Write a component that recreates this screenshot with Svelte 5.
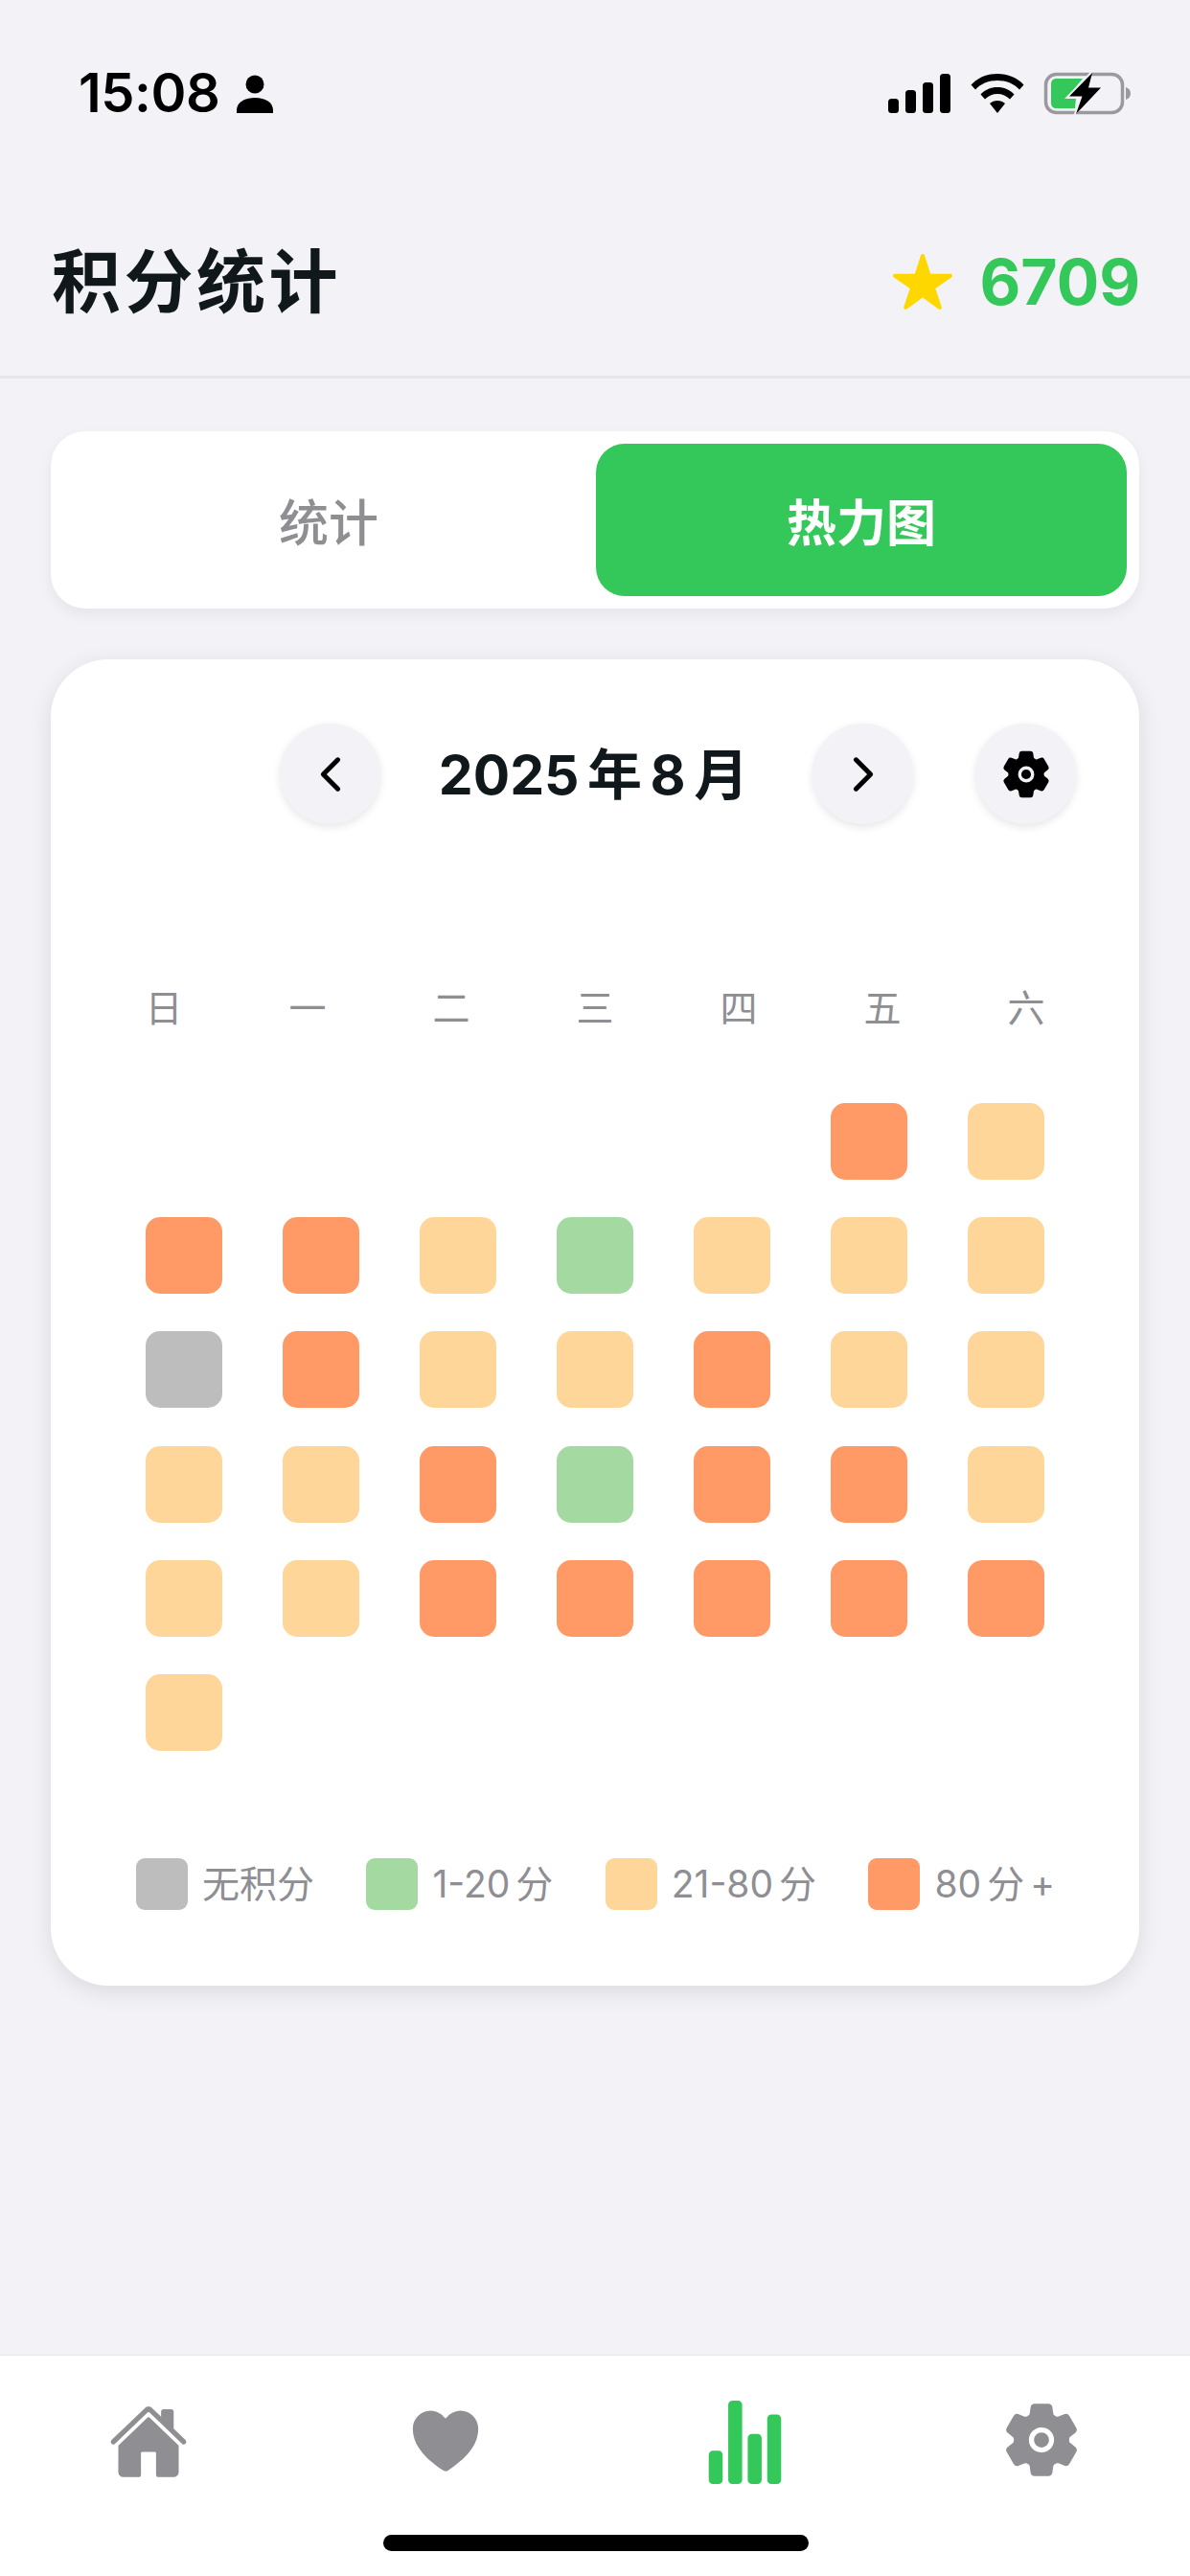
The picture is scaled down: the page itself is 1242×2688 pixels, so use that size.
<script>
  const map = { n: 'none', g: 'low', y: 'mid', o: 'high', e: 'empty' };
  const rows = ['eeeeeoy', 'ooygyyy', 'noyyoyy', 'yyogooy', 'yyooooo', 'yeeeeee'];
  const cells = rows.join('').split('').map((c) => map[c]);
  const days = ['日', '一', '二', '三', '四', '五', '六'];
  const legend = [
    { cls: 'none', label: '无积分' },
    { cls: 'low', label: '1-20 分' },
    { cls: 'mid', label: '21-80 分' },
    { cls: 'high', label: '80 分 +' }
  ];
  const gear = 'M470.39 300l-.47-.38-31.56-24.75a16.11 16.11 0 01-6.1-13.33v-11.56a16 16 0 016.11-13.22L469.92 212l.47-.38a26.68 26.68 0 005.9-34.06l-42.71-73.9a1.59 1.59 0 01-.13-.22A26.86 26.86 0 00401 92.14l-.35.13-37.1 14.93a15.94 15.94 0 01-14.47-1.29q-4.92-3.1-10-5.86a15.94 15.94 0 01-8.19-11.82l-5.59-39.59-.12-.72A27.22 27.22 0 00298.76 26h-85.52a26.92 26.92 0 00-26.45 22.39l-.09.56-5.57 39.67a16 16 0 01-8.13 11.82 175.21 175.21 0 00-10 5.82 15.92 15.92 0 01-14.43 1.27l-37.13-15-.35-.14a26.87 26.87 0 00-32.48 11.34l-.13.22-42.77 73.95a26.71 26.71 0 005.9 34.1l.47.38 31.56 24.75a16.11 16.11 0 016.1 13.33v11.56a16 16 0 01-6.11 13.22L42.08 300l-.47.38a26.68 26.68 0 00-5.9 34.06l42.71 73.9a1.59 1.59 0 01.13.22 26.86 26.86 0 0032.45 11.3l.35-.13 37.07-14.93a15.94 15.94 0 0114.47 1.29q4.92 3.11 10 5.86a15.94 15.94 0 018.19 11.82l5.56 39.59.12.72A27.22 27.22 0 00213.24 486h85.52a26.92 26.92 0 0026.45-22.39l.09-.56 5.57-39.67a16 16 0 018.18-11.82c3.42-1.84 6.76-3.79 10-5.82a15.92 15.92 0 0114.43-1.27l37.13 14.95.35.14a26.85 26.85 0 0032.48-11.34 2.53 2.53 0 01.13-.22l42.71-73.89a26.7 26.7 0 00-5.89-34.11zm-134.48-40.24a80 80 0 11-83.66-83.67 80.21 80.21 0 0183.66 83.67z';
</script>

<div class="page">
  <div class="status">
    <div class="status-left">
      <span class="time">15:08</span>
      <svg class="person" viewBox="0 0 38 40" aria-hidden="true">
        <circle cx="19" cy="10" r="9.5" />
        <path d="M0 40v-3c0-8 8-13 19-13s19 5 19 13v3z" />
      </svg>
    </div>
    <div class="status-right">
      <svg class="signal" viewBox="0 0 65 41" aria-hidden="true">
        <rect x="0" y="26" width="11" height="15" rx="3.5" />
        <rect x="18" y="17" width="11" height="24" rx="3.5" />
        <rect x="36" y="9" width="11" height="32" rx="3.5" />
        <rect x="54" y="0" width="11" height="41" rx="3.5" />
      </svg>
      <svg class="wifi" viewBox="0 0 56 41" aria-hidden="true">
        <path d="M0.5 11.5C7.5 4 17 0 28 0s20.500 4 27.500 11.500l-4.500 5C45 10 37 7 28 7S11 10 5 16.500z" />
        <path d="M10.500 21.500C15 16.500 21 14 28 14s13 2.500 17.500 7.500L41 26.500C37.500 23 33 21 28 21s-9.500 2-13 5.500z" />
        <path d="M20 31c2.200-2 5-3 8-3s5.800 1 8 3l-8 10z" />
      </svg>
      <svg class="battery" viewBox="0 0 90 45" aria-hidden="true">
        <rect class="batt-shell" x="1.500" y="2.500" width="80" height="40" rx="11" />
        <path class="batt-nub" d="M85 16c3 1 5 3 5 6.500S88 28 85 29z" />
        <path class="batt-fill" d="M13 7h27L26 24c-1 2 0 3 2 3h5l-1 11H13c-4 0-6-2-6-6V13c0-4 2-6 6-6z" />
        <path class="batt-gap" d="M50 -2L21 28h15l-6 19 34-33H47z" />
        <path class="batt-bolt" d="M50 1L26 25.500h13.500L33 44l26-27.500H46z" />
      </svg>
    </div>
  </div>

  <header class="header">
    <h1>积分统计</h1>
    <div class="score">
      <svg class="star" viewBox="0 0 512 512" aria-hidden="true">
        <path d="M394 480a16 16 0 01-9.39-3L256 383.76 127.39 477a16 16 0 01-24.55-18.08L153 310.35 23 221.2a16 16 0 019-29.2h160.38l48.4-148.95a16 16 0 0130.44 0l48.4 149H480a16 16 0 019.05 29.2L359 310.35l50.13 148.53A16 16 0 01394 480z" />
      </svg>
      <span>6709</span>
    </div>
  </header>

  <main class="content">
    <div class="tabs">
      <div class="tab">统计</div>
      <div class="tab active">热力图</div>
    </div>

    <section class="card">
      <div class="nav">
        <button class="round" aria-label="上个月">
          <svg class="chev" viewBox="0 0 512 512"><path d="M328 112L184 256l144 144" /></svg>
        </button>
        <div class="month">2025 年 8 月</div>
        <button class="round" aria-label="下个月">
          <svg class="chev" viewBox="0 0 512 512"><path d="M184 112l144 144-144 144" /></svg>
        </button>
        <button class="round gear-btn" aria-label="设置">
          <svg class="gear-sm" viewBox="0 0 512 512"><circle cx="256" cy="256" r="48" /><path d={gear} /></svg>
        </button>
      </div>

      <div class="weekdays">
        {#each days as d}<span>{d}</span>{/each}
      </div>

      <div class="grid">
        {#each cells as c}<i class="cell {c}"></i>{/each}
      </div>

      <div class="legend">
        {#each legend as l}
          <div class="legend-item"><i class="swatch {l.cls}"></i><span>{l.label}</span></div>
        {/each}
      </div>
    </section>
  </main>

  <nav class="tabbar">
    <svg class="ti ti-home" viewBox="0 0 512 512" aria-hidden="true">
      <path d="M261.560 101.280a8 8 0 00-11.060 0L66.400 277.150a8 8 0 00-2.470 5.790L63.900 448a32 32 0 0032 32H192a16 16 0 0016-16V328a8 8 0 018-8h80a8 8 0 018 8v136a16 16 0 0016 16h96.060a32 32 0 0032-32V282.940a8 8 0 00-2.470-5.790z" />
      <path d="M490.910 244.150l-74.800-71.560V64a16 16 0 00-16-16h-48a16 16 0 00-16 16v32l-57.920-55.380C272.770 35.140 264.710 32 256 32c-8.680 0-16.720 3.140-22.140 8.630l-212.700 203.500c-6.220 6-7 15.870-1.340 22.370A16 16 0 0043 267.560L250.500 69.280a8 8 0 0111.060 0l207.520 198.280a16 16 0 0022.590-.44c6.140-6.360 5.630-16.860-.76-22.970z" />
    </svg>
    <svg class="ti ti-heart" viewBox="0 0 512 512" aria-hidden="true">
      <path d="M256 448a32 32 0 01-18-5.570c-78.590-53.350-112.620-90.580-131.390-113.450-40-48.750-59.150-98.800-58.610-153C48.630 114.520 98.460 64 159.080 64c44.080 0 74.610 24.830 92.390 45.510a6 6 0 009.060 0C278.310 88.810 308.840 64 352.920 64c60.620 0 110.450 50.520 111.080 112.640.54 54.210-18.630 104.260-58.610 153-18.770 22.870-52.800 60.100-131.390 113.450a32 32 0 01-18 5.910z" />
    </svg>
    <svg class="ti ti-stats" viewBox="0 0 512 512" aria-hidden="true">
      <path d="M104 496H72a24 24 0 01-24-24V328a24 24 0 0124-24h32a24 24 0 0124 24v144a24 24 0 01-24 24zM328 496h-32a24 24 0 01-24-24V232a24 24 0 0124-24h32a24 24 0 0124 24v240a24 24 0 01-24 24zM440 496h-32a24 24 0 01-24-24V120a24 24 0 0124-24h32a24 24 0 0124 24v352a24 24 0 01-24 24zM216 496h-32a24 24 0 01-24-24V40a24 24 0 0124-24h32a24 24 0 0124 24v432a24 24 0 01-24 24z" />
    </svg>
    <svg class="ti ti-gear" viewBox="0 0 512 512" aria-hidden="true">
      <circle cx="256" cy="256" r="48" /><path d={gear} />
    </svg>
    <div class="home-indicator"></div>
  </nav>
</div>

<style>
  :global(body) {
    margin: 0;
    background: #f2f2f7;
  }
  .page {
    width: 1242px;
    height: 2688px;
    display: flex;
    flex-direction: column;
    background: #f2f2f7;
    overflow: hidden;
    font-family: Inter, "Noto Sans CJK SC", sans-serif;
    color: #11181c;
  }
  .status {
    height: 195px;
    box-sizing: border-box;
    padding: 75px 62px 0 82px;
    display: flex;
    justify-content: space-between;
    align-items: flex-start;
  }
  .status-left {
    display: flex;
    align-items: center;
    height: 45px;
    gap: 17px;
    color: #000;
  }
  .time {
    font-size: 56px;
    line-height: 45px;
    font-weight: 600;
    letter-spacing: -0.4px;
  }
  .person {
    width: 38px;
    height: 40px;
    fill: #000;
  }
  .status-right {
    display: flex;
    align-items: center;
    height: 45px;
    gap: 21px;
  }
  .signal {
    width: 65px;
    height: 41px;
    fill: #000;
  }
  .wifi {
    width: 56px;
    height: 41px;
    fill: #000;
  }
  .battery {
    width: 90px;
    height: 45px;
    overflow: visible;
  }
  .batt-shell {
    fill: none;
    stroke: #9a9a9e;
    stroke-width: 3.5;
  }
  .batt-nub {
    fill: #9a9a9e;
  }
  .batt-fill {
    fill: #34c759;
  }
  .batt-gap {
    fill: #f2f2f7;
  }
  .batt-bolt {
    fill: #000;
  }
  .header {
    height: 200px;
    box-sizing: border-box;
    border-bottom: 3px solid #e5e5ea;
    padding: 0 52px 0 54px;
    display: flex;
    align-items: center;
    justify-content: space-between;
  }
  h1 {
    margin: 0;
    font-size: 72px;
    line-height: 90px;
    font-weight: 700;
    letter-spacing: 3.5px;
  }
  .score {
    display: flex;
    align-items: center;
    gap: 26px;
    color: #34c759;
    font-size: 66px;
    line-height: 80px;
    font-weight: 700;
  }
  .star {
    width: 66px;
    height: 66px;
    fill: #ffd700;
  }
  .content {
    flex: 1;
    box-sizing: border-box;
    padding: 55px 53px 0;
  }
  .tabs {
    height: 185px;
    box-sizing: border-box;
    padding: 13px;
    display: flex;
    gap: 2px;
    background: #fff;
    border-radius: 36px;
    box-shadow: 0 6px 15px rgba(0, 0, 0, 0.06);
  }
  .tab {
    flex: 1;
    display: flex;
    align-items: center;
    justify-content: center;
    border-radius: 30px;
    font-size: 52px;
    font-weight: 500;
    color: #8e8e93;
  }
  .tab.active {
    background: #34c759;
    color: #fff;
    font-weight: 600;
  }
  .card {
    margin-top: 53px;
    height: 1384px;
    box-sizing: border-box;
    padding-top: 67px;
    background: #fff;
    border-radius: 60px;
    box-shadow: 0 6px 24px rgba(0, 0, 0, 0.1);
  }
  .nav {
    height: 105px;
    padding-right: 66px;
    display: flex;
    justify-content: flex-end;
    align-items: center;
  }
  .round {
    width: 105px;
    height: 105px;
    padding: 0;
    border: 0;
    border-radius: 50%;
    background: #f2f2f7;
    box-shadow: 0 3px 9px rgba(0, 0, 0, 0.1);
    display: flex;
    align-items: center;
    justify-content: center;
  }
  .gear-btn {
    margin-left: 65px;
  }
  .chev {
    width: 54px;
    height: 54px;
    fill: none;
    stroke: #000;
    stroke-width: 48;
    stroke-linecap: round;
    stroke-linejoin: round;
  }
  .gear-sm {
    width: 54px;
    height: 54px;
    fill: #000;
  }
  .month {
    width: 451px;
    box-sizing: border-box;
    padding: 3px 6px 0 0;
    text-align: center;
    font-size: 57px;
    line-height: 72px;
    font-weight: 700;
    word-spacing: -5px;
  }
  .weekdays {
    margin-top: 161px;
    height: 48px;
    padding: 0 43px;
    display: grid;
    grid-template-columns: repeat(7, 1fr);
    justify-items: center;
    align-items: center;
    font-size: 39px;
    color: #8e8e93;
  }
  .grid {
    margin-top: 82px;
    display: grid;
    grid-template-columns: repeat(7, 143px);
    grid-auto-rows: 119.2px;
    justify-content: center;
    justify-items: center;
  }
  .cell {
    width: 80px;
    height: 80px;
    border-radius: 15px;
  }
  .cell.empty {
    background: transparent;
  }
  .none {
    background: #bdbdbd;
  }
  .low {
    background: #a4d9a1;
  }
  .mid {
    background: #ffd699;
  }
  .high {
    background: #ff9966;
  }
  .legend {
    margin-top: 73px;
    padding: 0 88px 0 89px;
    display: flex;
    justify-content: space-between;
  }
  .legend-item {
    display: flex;
    align-items: center;
    gap: 15px;
    font-size: 39px;
    line-height: 54px;
    color: #8e8e93;
    word-spacing: -5px;
  }
  .swatch {
    width: 54px;
    height: 54px;
    border-radius: 9px;
  }
  .tabbar {
    position: relative;
    height: 231px;
    flex: none;
    box-sizing: border-box;
    background: #fff;
    border-top: 1px solid #e5e5ea;
  }
  .ti {
    position: absolute;
    fill: #8e8e93;
    width: 84px;
    height: 84px;
  }
  .ti-home {
    left: 113px;
    top: 48px;
  }
  .ti-heart {
    left: 423px;
    top: 47px;
  }
  .ti-stats {
    left: 731px;
    top: 44px;
    width: 93px;
    height: 93px;
    fill: #34c759;
  }
  .ti-gear {
    left: 1045px;
    top: 46px;
  }
  .home-indicator {
    position: absolute;
    left: 400px;
    top: 187px;
    width: 444px;
    height: 17px;
    border-radius: 9px;
    background: #000;
  }
</style>
